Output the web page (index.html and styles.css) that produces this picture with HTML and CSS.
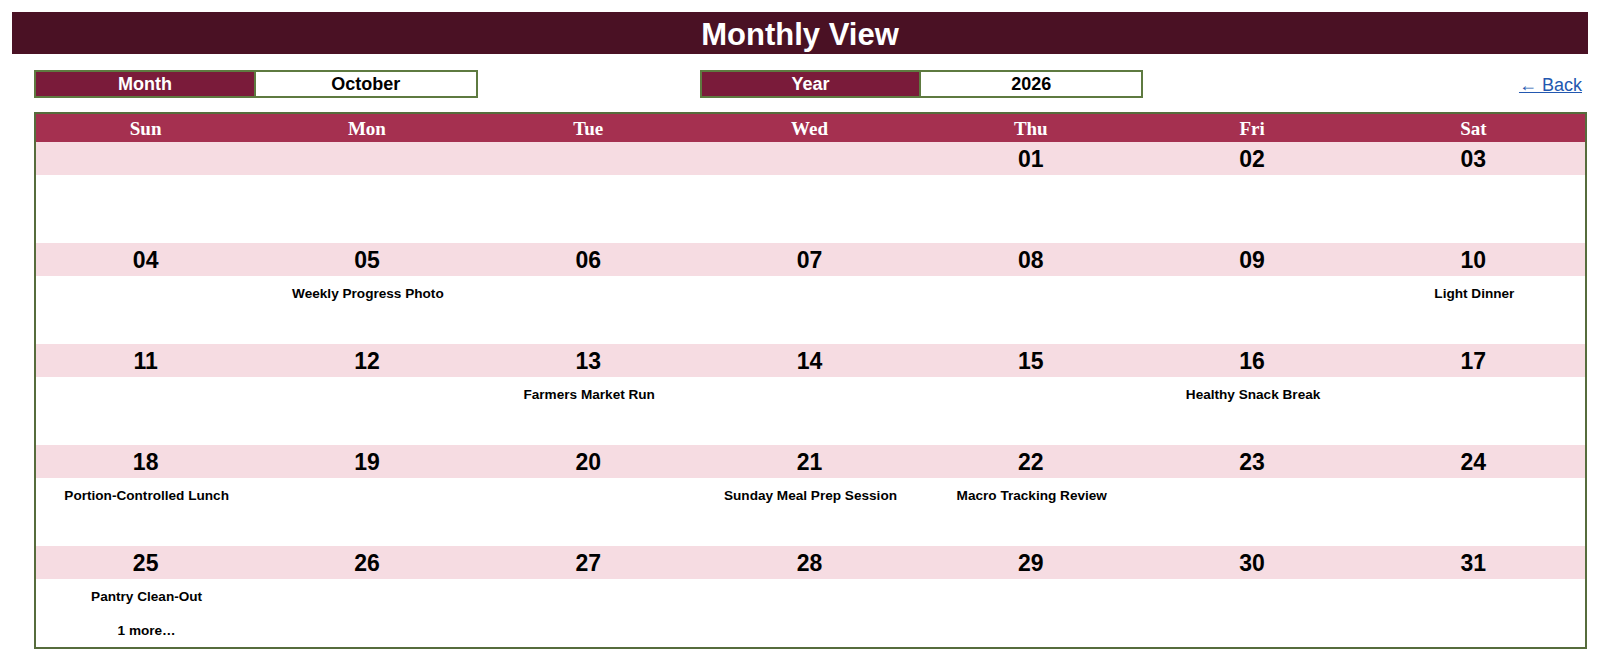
FILE: index.html
```html
<!DOCTYPE html>
<html lang="en">
<head>
<meta charset="utf-8">
<title>Monthly View</title>
<link rel="stylesheet" href="styles.css">
</head>
<body>
<div class="page">
  <header class="title">Monthly View</header>

  <div class="controls">
    <div class="pair pair-month">
      <div class="pair-label">Month</div>
      <div class="pair-value">October</div>
    </div>
    <div class="pair pair-year">
      <div class="pair-label">Year</div>
      <div class="pair-value">2026</div>
    </div>
    <a class="back" href="#">&larr; Back</a>
  </div>

  <div class="calendar">
    <div class="dow">
      <div>Sun</div><div>Mon</div><div>Tue</div><div>Wed</div><div>Thu</div><div>Fri</div><div>Sat</div>
    </div>

    <div class="week">
      <div class="day"><div class="num"></div><div class="events"></div></div>
      <div class="day"><div class="num"></div><div class="events"></div></div>
      <div class="day"><div class="num"></div><div class="events"></div></div>
      <div class="day"><div class="num"></div><div class="events"></div></div>
      <div class="day"><div class="num">01</div><div class="events"></div></div>
      <div class="day"><div class="num">02</div><div class="events"></div></div>
      <div class="day"><div class="num">03</div><div class="events"></div></div>
    </div>

    <div class="week">
      <div class="day"><div class="num">04</div><div class="events"></div></div>
      <div class="day"><div class="num">05</div><div class="events"><div class="event">Weekly Progress Photo</div></div></div>
      <div class="day"><div class="num">06</div><div class="events"></div></div>
      <div class="day"><div class="num">07</div><div class="events"></div></div>
      <div class="day"><div class="num">08</div><div class="events"></div></div>
      <div class="day"><div class="num">09</div><div class="events"></div></div>
      <div class="day"><div class="num">10</div><div class="events"><div class="event">Light Dinner</div></div></div>
    </div>

    <div class="week">
      <div class="day"><div class="num">11</div><div class="events"></div></div>
      <div class="day"><div class="num">12</div><div class="events"></div></div>
      <div class="day"><div class="num">13</div><div class="events"><div class="event">Farmers Market Run</div></div></div>
      <div class="day"><div class="num">14</div><div class="events"></div></div>
      <div class="day"><div class="num">15</div><div class="events"></div></div>
      <div class="day"><div class="num">16</div><div class="events"><div class="event">Healthy Snack Break</div></div></div>
      <div class="day"><div class="num">17</div><div class="events"></div></div>
    </div>

    <div class="week">
      <div class="day"><div class="num">18</div><div class="events"><div class="event">Portion-Controlled Lunch</div></div></div>
      <div class="day"><div class="num">19</div><div class="events"></div></div>
      <div class="day"><div class="num">20</div><div class="events"></div></div>
      <div class="day"><div class="num">21</div><div class="events"><div class="event">Sunday Meal Prep Session</div></div></div>
      <div class="day"><div class="num">22</div><div class="events"><div class="event">Macro Tracking Review</div></div></div>
      <div class="day"><div class="num">23</div><div class="events"></div></div>
      <div class="day"><div class="num">24</div><div class="events"></div></div>
    </div>

    <div class="week">
      <div class="day"><div class="num">25</div><div class="events"><div class="event">Pantry Clean-Out</div><div class="event">1 more…</div></div></div>
      <div class="day"><div class="num">26</div><div class="events"></div></div>
      <div class="day"><div class="num">27</div><div class="events"></div></div>
      <div class="day"><div class="num">28</div><div class="events"></div></div>
      <div class="day"><div class="num">29</div><div class="events"></div></div>
      <div class="day"><div class="num">30</div><div class="events"></div></div>
      <div class="day"><div class="num">31</div><div class="events"></div></div>
    </div>
  </div>
</div>
</body>
</html>
```

FILE: styles.css
```css
* { box-sizing: border-box; }

html, body {
  margin: 0;
  padding: 0;
  background: #ffffff;
}

body {
  font-family: "Liberation Sans", Arial, sans-serif;
  color: #000;
}

.page {
  padding: 12px 12px 0 12px;
}

.title {
  height: 42px;
  background: #4a1124;
  color: #ffffff;
  font-size: 31px;
  font-weight: bold;
  display: flex;
  align-items: center;
  justify-content: center;
  padding-top: 3px;
}

.controls {
  margin: 16px 0 0 22px;
  width: 1553px;
  height: 28px;
  display: grid;
  grid-template-columns: repeat(7, 1fr);
  align-items: stretch;
}

.pair {
  display: grid;
  grid-template-columns: 1fr 1fr;
  border: 2px solid #5e7a40;
  font-size: 18px;
  font-weight: bold;
}

.pair-month { grid-column: 1 / 3; }
.pair-year { grid-column: 4 / 6; }

.pair-label {
  background: #7a1b3a;
  color: #ffffff;
  display: flex;
  align-items: center;
  justify-content: center;
  padding-top: 1px;
  border-right: 2px solid #5e7a40;
}

.pair-value {
  background: #ffffff;
  color: #000000;
  display: flex;
  align-items: center;
  justify-content: center;
  padding-top: 1px;
}

.back {
  grid-column: 7 / 8;
  justify-self: end;
  align-self: center;
  margin-right: 5px;
  margin-top: 2px;
  color: #2358b0;
  font-size: 18px;
  text-decoration: underline;
}

.calendar {
  margin: 14px 0 0 22px;
  width: 1553px;
  border: 2px solid #566c3c;
}

.dow {
  display: grid;
  grid-template-columns: repeat(7, 1fr);
  height: 28px;
  background: #a53050;
  color: #ffffff;
  font-family: "Liberation Serif", "Times New Roman", serif;
  font-weight: bold;
  font-size: 19px;
}

.dow div {
  display: flex;
  align-items: center;
  justify-content: center;
  padding-right: 2px;
  padding-top: 1px;
}

.week {
  display: grid;
  grid-template-columns: repeat(7, 1fr);
  height: 101px;
}

.day {
  display: flex;
  flex-direction: column;
}

.num {
  height: 33px;
  background: #f6dce2;
  font-size: 23px;
  font-weight: bold;
  display: flex;
  align-items: center;
  justify-content: center;
  padding-right: 2px;
  padding-top: 1px;
}

.events {
  height: 68px;
  display: flex;
  flex-direction: column;
}

.event {
  height: 34px;
  display: flex;
  align-items: center;
  justify-content: center;
  font-size: 13.6px;
  font-weight: bold;
  white-space: nowrap;
}
```
